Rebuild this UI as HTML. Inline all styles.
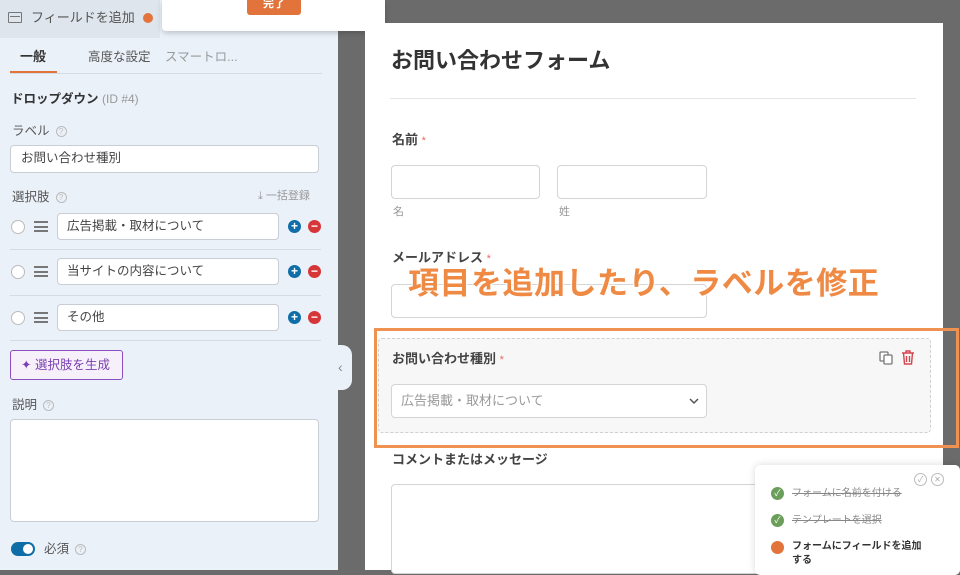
<!DOCTYPE html>
<html><head><meta charset="utf-8"><style>
*{margin:0;padding:0;box-sizing:border-box}
body{width:960px;height:570px;overflow:hidden;position:relative;background:#6b6b6b;font-family:"Liberation Sans","Noto Sans CJK JP",sans-serif;color:#444;line-height:1.3}
.a{position:absolute}
.lp{left:0;top:0;width:338px;height:570px;background:#ebf1f9}
.inp{background:#fff;border:1px solid #c9ced6;border-radius:4px}
.q{display:inline-block;width:11px;height:11px;border:1px solid #bbb;border-radius:50%;font-size:8px;line-height:9px;text-align:center;color:#bbb;vertical-align:middle;margin-left:6px}
.t13{font-size:13px}
.lbl{font-size:12.5px;color:#555}
.ham{width:14px;height:11px;border-top:2px solid #777;border-bottom:2px solid #777}
.ham:after{content:"";position:absolute;left:0;top:2.5px;width:14px;height:2px;background:#777}
.rad{width:14px;height:14px;border:1px solid #bbb;border-radius:50%;background:#fff}
.pl,.mi{width:13px;height:13px;border-radius:50%;color:#fff;font-size:12px;line-height:12px;text-align:center;font-weight:bold}
.pl{background:#0f6ea8}.mi{background:#d63638}
.fl{font-size:13px;font-weight:bold;color:#444}
.st{color:#e66;font-weight:normal;font-size:11px}
</style></head><body>
<div class="a lp"></div>
<div class="a" style="left:0;top:0;width:160px;height:38px;background:#dfe5ec"></div>
<div class="a" style="left:8px;top:12px;width:14px;height:11px;border:1.5px solid #777;border-radius:1px"></div>
<div class="a" style="left:10px;top:16px;width:10px;height:1px;background:#777"></div>
<div class="a t13" style="left:31px;top:10px;color:#555">フィールドを追加</div>
<div class="a" style="left:143px;top:13px;width:10px;height:10px;border-radius:50%;background:#e2733a"></div>
<div class="a" style="left:162px;top:0;width:223px;height:31px;background:#fff;border-radius:0 0 4px 4px;box-shadow:0 2px 6px rgba(0,0,0,.2)"></div>
<div class="a" style="left:247px;top:0;width:54px;height:15px;background:#e2733a;border-radius:0 0 3px 3px;color:#fff;font-size:11px;text-align:center;line-height:8px;font-weight:bold">完了</div>
<div class="a t13" style="left:20px;top:49px;font-weight:bold;color:#333">一般</div>
<div class="a" style="left:10px;top:71px;width:47px;height:3px;background:#e2733a"></div>
<div class="a" style="left:10px;top:73px;width:312px;height:1px;background:#d5dbe3"></div>
<div class="a" style="left:88px;top:49px;font-size:12.5px;color:#555">高度な設定</div>
<div class="a" style="left:165px;top:49px;font-size:12.5px;color:#999">スマートロ...</div>
<div class="a" style="left:11px;top:91px;font-size:12.5px;font-weight:bold;color:#333">ドロップダウン <span style="font-weight:normal;color:#999;font-size:12px">(ID #4)</span></div>
<div class="a lbl" style="left:12px;top:123px">ラベル<span class="q">?</span></div>
<div class="a inp" style="left:10px;top:145px;width:309px;height:28px"></div>
<div class="a lbl" style="left:21px;top:150px;color:#444">お問い合わせ種別</div>
<div class="a lbl" style="left:12px;top:189px">選択肢<span class="q">?</span></div>
<div class="a" style="left:258px;top:189px;font-size:11px;color:#999">⤓ 一括登録</div>
<div class="a rad" style="left:11px;top:220px"></div><div class="a ham" style="left:34px;top:221px"></div>
<div class="a inp" style="left:57px;top:213px;width:222px;height:27px"></div><div class="a lbl" style="left:67px;top:218px;color:#444">広告掲載・取材について</div>
<div class="a pl" style="left:288px;top:220px">+</div><div class="a mi" style="left:308px;top:220px">−</div>
<div class="a" style="left:10px;top:249px;width:311px;height:1px;background:#d5dbe3"></div>
<div class="a rad" style="left:11px;top:265px"></div><div class="a ham" style="left:34px;top:266px"></div>
<div class="a inp" style="left:57px;top:258px;width:222px;height:27px"></div><div class="a lbl" style="left:67px;top:263px;color:#444">当サイトの内容について</div>
<div class="a pl" style="left:288px;top:265px">+</div><div class="a mi" style="left:308px;top:265px">−</div>
<div class="a" style="left:10px;top:295px;width:311px;height:1px;background:#d5dbe3"></div>
<div class="a rad" style="left:11px;top:311px"></div><div class="a ham" style="left:34px;top:312px"></div>
<div class="a inp" style="left:57px;top:304px;width:222px;height:27px"></div><div class="a lbl" style="left:67px;top:309px;color:#444">その他</div>
<div class="a pl" style="left:288px;top:311px">+</div><div class="a mi" style="left:308px;top:311px">−</div>
<div class="a" style="left:10px;top:340px;width:311px;height:1px;background:#d5dbe3"></div>
<div class="a" style="left:10px;top:350px;width:113px;height:30px;border:1px solid #8a4fbf;border-radius:3px;background:#f6f0fb"></div>
<div class="a" style="left:21px;top:357px;font-size:12.5px;color:#7a3fb0">✦ 選択肢を生成</div>
<div class="a lbl" style="left:12px;top:397px">説明<span class="q">?</span></div>
<div class="a inp" style="left:10px;top:419px;width:309px;height:103px"></div>
<div class="a" style="left:11px;top:542px;width:24px;height:14px;border-radius:7px;background:#0f6ea8"></div>
<div class="a" style="left:23px;top:544px;width:10px;height:10px;border-radius:50%;background:#fff"></div>
<div class="a lbl" style="left:44px;top:541px">必須<span class="q">?</span></div>
<div class="a" style="left:332px;top:345px;width:20px;height:45px;background:#ebf1f9;border-radius:0 10px 10px 0"></div>
<div class="a" style="left:338px;top:358px;color:#888;font-size:14px">‹</div>
<div class="a" style="left:365px;top:23px;width:578px;height:547px;background:#fff"></div>
<div class="a" style="left:391px;top:47px;font-size:22px;font-weight:bold;color:#333">お問い合わせフォーム</div>
<div class="a" style="left:390px;top:98px;width:526px;height:1px;background:#e5e5e5"></div>
<div class="a fl" style="left:392px;top:132px">名前 <span class="st">*</span></div>
<div class="a inp" style="left:391px;top:165px;width:149px;height:34px;border-color:#d4d4d4"></div>
<div class="a inp" style="left:557px;top:165px;width:150px;height:34px;border-color:#d4d4d4"></div>
<div class="a" style="left:393px;top:205px;font-size:11px;color:#999">名</div>
<div class="a" style="left:559px;top:205px;font-size:11px;color:#999">姓</div>
<div class="a fl" style="left:392px;top:250px">メールアドレス <span class="st">*</span></div>
<div class="a inp" style="left:391px;top:284px;width:316px;height:34px;border-color:#d4d4d4"></div>
<div class="a" style="left:408px;top:264px;font-size:31px;font-weight:bold;color:#ef8a45;letter-spacing:0.5px;text-shadow:0 0 2px #fff,0 0 2px #fff,0 0 3px #fff">項目を追加したり、ラベルを修正</div>
<div class="a" style="left:378px;top:338px;width:553px;height:95px;background:#f7f7f7;border:1px dashed #d0d0d0;border-radius:4px"></div>
<div class="a" style="left:374px;top:328px;width:585px;height:120px;border:3px solid #ef9150"></div>
<div class="a fl" style="left:392px;top:351px">お問い合わせ種別 <span class="st">*</span></div>
<svg class="a" style="left:879px;top:351px" width="14" height="14" viewBox="0 0 14 14"><rect x="1" y="1" width="8" height="9" rx="1" fill="#fff" stroke="#777" stroke-width="1.3"/><rect x="5" y="4" width="8" height="9" rx="1" fill="#fff" stroke="#777" stroke-width="1.3"/></svg>
<svg class="a" style="left:901px;top:350px" width="14" height="15" viewBox="0 0 14 15"><path d="M1 3h12M5 3V1h4v2M2.5 3l1 11h7l1-11M5.5 6v6M8.5 6v6" fill="none" stroke="#d64550" stroke-width="1.4"/></svg>
<div class="a inp" style="left:391px;top:384px;width:316px;height:34px;border-color:#d4d4d4"></div>
<div class="a" style="left:401px;top:393px;font-size:13px;color:#999">広告掲載・取材について</div>
<svg class="a" style="left:689px;top:398px" width="10" height="7" viewBox="0 0 10 7"><path d="M1 1l4 4 4-4" fill="none" stroke="#555" stroke-width="1.5"/></svg>
<div class="a fl" style="left:392px;top:452px">コメントまたはメッセージ</div>
<div class="a inp" style="left:391px;top:484px;width:420px;height:90px;border-color:#d4d4d4"></div>
<div class="a" style="left:755px;top:465px;width:205px;height:110px;background:#fff;border-radius:5px;box-shadow:0 0 8px rgba(0,0,0,.15)"></div>
<div class="a" style="left:914px;top:473px;width:13px;height:13px;border:1px solid #bbb;border-radius:50%;font-size:8px;color:#aaa;text-align:center;line-height:11px">✓</div>
<div class="a" style="left:931px;top:473px;width:13px;height:13px;border:1px solid #bbb;border-radius:50%;font-size:8px;color:#aaa;text-align:center;line-height:11px">✕</div>
<div class="a" style="left:771px;top:487px;width:13px;height:13px;border-radius:50%;background:#6a9e5a;color:#fff;font-size:9px;text-align:center;line-height:13px">✓</div>
<div class="a" style="left:792px;top:487px;font-size:10px;color:#888;text-decoration:line-through">フォームに名前を付ける</div>
<div class="a" style="left:771px;top:514px;width:13px;height:13px;border-radius:50%;background:#6a9e5a;color:#fff;font-size:9px;text-align:center;line-height:13px">✓</div>
<div class="a" style="left:792px;top:514px;font-size:10px;color:#888;text-decoration:line-through">テンプレートを選択</div>
<div class="a" style="left:771px;top:541px;width:13px;height:13px;border-radius:50%;background:#e2733a"></div>
<div class="a" style="left:792px;top:540px;font-size:10px;font-weight:bold;color:#333;line-height:14px;width:150px">フォームにフィールドを追加<br>する</div>
</body></html>
